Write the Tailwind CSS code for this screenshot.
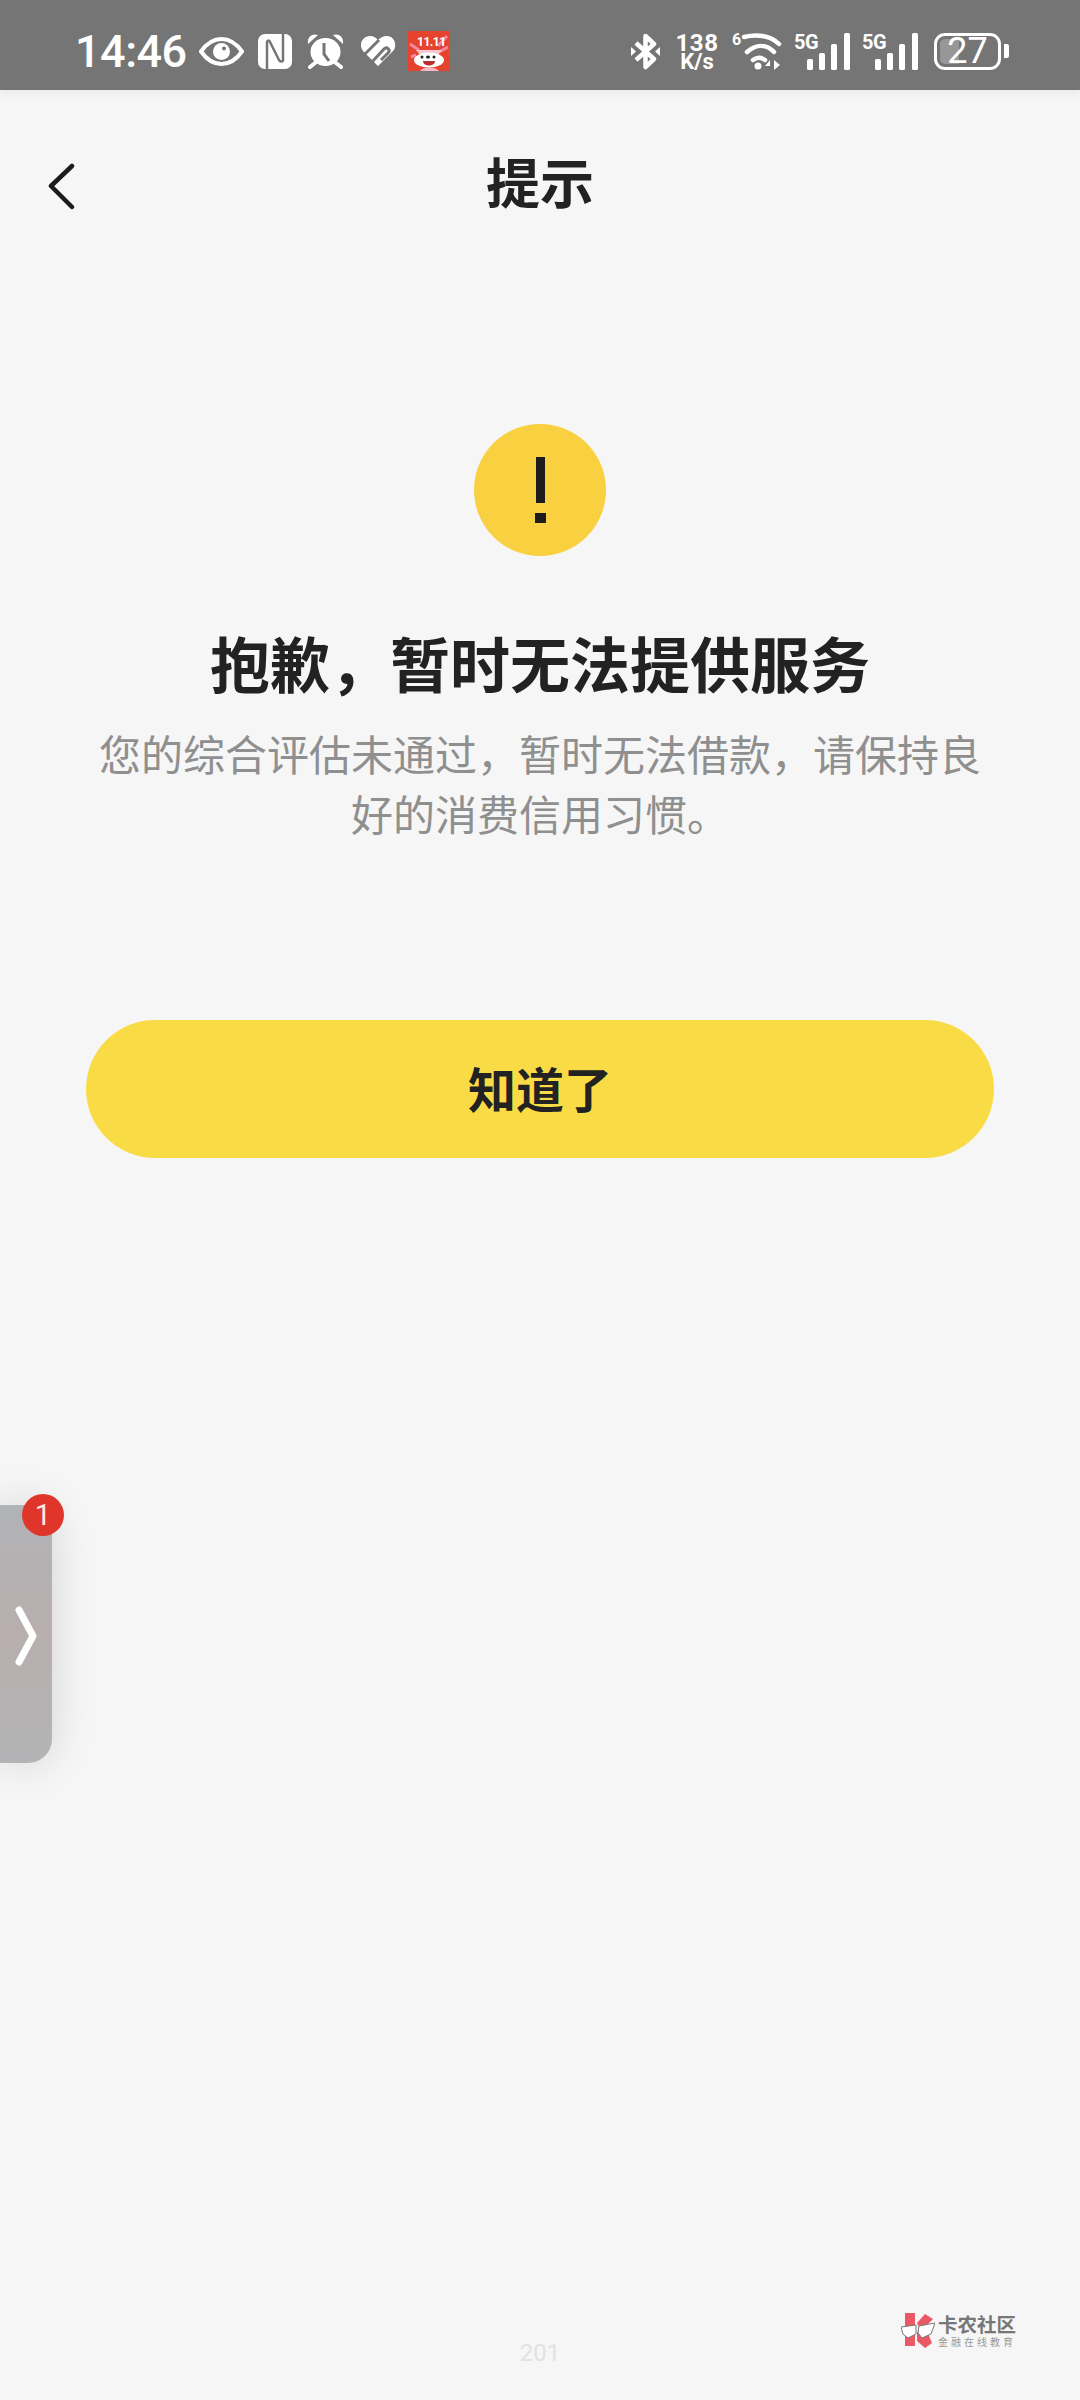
<!DOCTYPE html>
<html lang="zh-CN">
<head>
<meta charset="UTF-8">
<script src="https://cdn.jsdelivr.net/npm/@tailwindcss/browser@4"></script>
<title>提示</title>
</head>
<body class="bg-[#f6f6f6] font-['Noto_Sans_CJK_SC','Noto_Sans',sans-serif]">
<div class="relative w-[1080px] h-[2400px] overflow-hidden flex flex-col items-center">

  <!-- status bar -->
  <div class="w-full h-[90px] shrink-0 bg-[#757575] text-white flex items-center pl-[75px] pt-[12px] shadow-[0_3px_8px_rgba(0,0,0,0.06)]">
    <span class="font-['Roboto',sans-serif] font-medium text-[45px] leading-none tracking-[-0.5px] w-[109px] whitespace-nowrap">14:46</span>
    <svg class="w-[45px] h-[29px] ml-[15px] shrink-0" viewBox="0 0 45 29"><path d="M2 14.500C8 6 14 2 22.500 2S37 6 43 14.500C37 23 31 27 22.500 27S8 23 2 14.500Z" fill="none" stroke="white" stroke-width="4"/><circle cx="22.500" cy="14.500" r="8.500" fill="white"/><circle cx="25" cy="11.500" r="2" fill="#757575"/></svg>
    <svg class="w-[34px] h-[35px] ml-[14px] shrink-0" viewBox="0 0 34 35"><rect width="34" height="35" rx="7" fill="white"/><path d="M9 35V9C9 6 11 6 12 8L21 26C22 28 25 28 25 26V0" fill="none" stroke="#757575" stroke-width="2.500"/></svg>
    <svg class="w-[37px] h-[35px] ml-[15px] shrink-0" viewBox="0 0 37 35"><ellipse cx="18.500" cy="18" rx="15" ry="14" fill="white"/><path d="M1 10C0 3 5-1 11 1ZM36 10C37 3 32-1 26 1Z" fill="white"/><path d="M8 29 3 33M29 29 34 33" stroke="white" stroke-width="4" stroke-linecap="round"/><path d="M17 9V20L22 27" fill="none" stroke="#757575" stroke-width="3"/></svg>
    <svg class="w-[36px] h-[30px] ml-[16px] shrink-0" viewBox="0 0 36 30"><path d="M18 30 3 15C-2 8 3 0 10 0 14 0 16 2 18 4 20 2 23 0 27 0 34 0 38 9 33 15Z" fill="white"/><path d="M3 20 19 4M12 26 24 13C27 10 31 14 28 17L21 24" fill="none" stroke="#757575" stroke-width="3"/></svg>
    <div class="relative w-[41px] h-[40px] ml-[12px] shrink-0 bg-[#e5432e]">
      <svg class="w-[41px] h-[40px]" viewBox="0 0 41 40"><path d="M2 13 11 19M39 5 30 15M40 16 31 21M3 26 8 24" stroke="#f08aa0" stroke-width="3"/><path d="M8 19H34L30 24H12Z" fill="#f7c6d0"/><ellipse cx="21" cy="29" rx="15" ry="7.500" fill="white"/><path d="M12 40C16 35 26 35 31 40Z" fill="#f4b8c4"/><path d="M15 30H27C27 36 15 36 15 30Z" fill="#b92f2a"/><circle cx="14" cy="26" r="1.500" fill="#222"/><circle cx="26" cy="26" r="1.500" fill="#222"/><ellipse cx="20" cy="26" rx="2" ry="1.500" fill="#222"/></svg>
      <span class="absolute left-[9px] top-[4px] font-['Roboto',sans-serif] font-bold text-[12px] leading-[14px] tracking-[-0.5px]">11.11</span>
    </div>

    <svg class="w-[29px] h-[37px] ml-[182px] shrink-0" viewBox="0 0 29 37"><path d="M5 10 23 26 14.500 34V3L23 11 5 27" fill="none" stroke="white" stroke-width="4.500" stroke-linejoin="round"/><path d="M0 14 5 18.500 0 23ZM29 14 24 18.500 29 23Z" fill="white"/></svg>
    <div class="w-[42px] ml-[16px] shrink-0 flex flex-col items-center font-['Roboto',sans-serif] font-bold leading-none">
      <span class="text-[24px] h-[20px] leading-[20px] tracking-[0.5px]">138</span>
      <span class="text-[22px] h-[17px] leading-[17px]">K/s</span>
    </div>
    <div class="relative w-[51px] h-[37px] ml-[14px] shrink-0">
      <svg class="w-[51px] h-[37px]" viewBox="0 0 51 37"><path d="M12 4C24 1 38 2 47 11M15 19C24 11 34 11 42 19M21 27C25 24 29 24 33 27" fill="none" stroke="white" stroke-width="4.500" stroke-linecap="round"/><circle cx="26" cy="33" r="3.500" fill="white"/><path d="M38 37V27L33 33H38ZM42 27V37L48 32Z" fill="white"/></svg>
      <span class="absolute left-0 top-0 font-['Roboto',sans-serif] font-bold text-[16px] leading-[13px]">6</span>
    </div>
    <div class="relative w-[56px] h-[37px] ml-[11px] shrink-0">
      <svg class="w-[56px] h-[37px]" viewBox="0 0 56 37"><rect x="13" y="26" width="6" height="11" rx="1.500" fill="white"/><rect x="25" y="20" width="6" height="17" rx="1.500" fill="white"/><rect x="37" y="11" width="6" height="26" rx="1.500" fill="white"/><rect x="50" y="0" width="6" height="37" rx="1.500" fill="white"/></svg>
      <span class="absolute left-0 top-0 font-['Roboto',sans-serif] font-bold text-[20px] leading-[18px] tracking-[-0.5px]">5G</span>
    </div>
    <div class="relative w-[56px] h-[37px] ml-[12px] shrink-0">
      <svg class="w-[56px] h-[37px]" viewBox="0 0 56 37"><rect x="13" y="26" width="6" height="11" rx="1.500" fill="white"/><rect x="25" y="20" width="6" height="17" rx="1.500" fill="white"/><rect x="37" y="11" width="6" height="26" rx="1.500" fill="white"/><rect x="50" y="0" width="6" height="37" rx="1.500" fill="white"/></svg>
      <span class="absolute left-0 top-0 font-['Roboto',sans-serif] font-bold text-[20px] leading-[18px] tracking-[-0.5px]">5G</span>
    </div>
    <div class="relative ml-[16px] shrink-0 w-[67px] h-[37px] border-[3px] border-white rounded-[11px] flex items-center justify-center">
      <div class="absolute left-[3px] top-[3px] bottom-[3px] w-[19px] bg-white/25 rounded-l-[5px]"></div>
      <span class="relative font-['Roboto',sans-serif] text-[36px] leading-none">27</span>
    </div>
    <div class="ml-[3px] w-[5px] h-[14px] bg-white rounded-r-[2px] shrink-0"></div>
  </div>

  <!-- title bar -->
  <div class="w-full h-[187px] shrink-0 flex items-center justify-center relative">
    <svg class="absolute left-[46px] top-[72px] w-[32px] h-[48px]" viewBox="0 0 32 48"><path d="M26 4 5 24 26 45" fill="none" stroke="#1c1c1c" stroke-width="4.500" stroke-linecap="round" stroke-linejoin="round"/></svg>
    <h1 class="text-[54px] font-bold text-[#222] leading-none -mt-[6px]">提示</h1>
  </div>

  <!-- result -->
  <div class="w-[132px] h-[132px] mt-[147px] rounded-full bg-[#f9d03f] flex flex-col items-center justify-center shrink-0">
    <div class="w-[9px] h-[46px] bg-[#1c1c1c]"></div>
    <div class="w-[11px] h-[10px] bg-[#1c1c1c] mt-[10px]"></div>
  </div>
  <h2 class="mt-[66px] text-[60px] font-bold text-[#222] leading-[80px] whitespace-nowrap">抱歉，暂时无法提供服务</h2>
  <p class="mt-[21px] w-[890px] text-center text-[42px] leading-[60px] text-[#8f8f8f]">您的综合评估未通过，暂时无法借款，请保持良好的消费信用习惯。</p>

  <button class="mt-[177px] w-[908px] h-[138px] shrink-0 rounded-full bg-[#f9dc45] pb-[4px] text-[48px] font-bold text-[#222]">知道了</button>

  <!-- side tab -->
  <div class="absolute left-0 top-[1505px] w-[52px] h-[258px] rounded-r-[24px] bg-gradient-to-b from-[#b1b3b6] via-[#b8aeae] to-[#b3b4b6] shadow-[0_0_44px_rgba(0,0,0,0.14)] flex items-center">
    <svg class="w-[22px] h-[60px] ml-[15px] mt-[4px]" viewBox="0 0 22 60"><path d="M4 4 18 30 4 56" fill="none" stroke="white" stroke-width="7" stroke-linecap="round" stroke-linejoin="round"/></svg>
  </div>
  <div class="absolute left-[22px] top-[1494px] w-[42px] h-[42px] rounded-full bg-[#e0352b] text-[#ffe9e4] flex items-center justify-center font-['Roboto',sans-serif] text-[29px] leading-none">1</div>

  <!-- footer -->
  <span class="absolute left-0 right-0 top-[2341px] text-center font-['Roboto',sans-serif] text-[24px] leading-none text-[#e2e2e2]">201</span>
  <div class="absolute left-[901px] top-[2313px] flex items-start">
    <svg class="w-[34px] h-[35px] shrink-0" viewBox="0 0 34 35"><path d="M4 0H14V33H4ZM16 10 24 1 32 6 20 18ZM16 19 26 18 31 30 24 35 16 28Z" fill="#ea5a66"/><path d="M0 14 15 12 15 21 7 25 2 21ZM18 13 34 10 30 21 21 25 17 20Z" fill="white" stroke="#777" stroke-width="1"/></svg>
    <div class="ml-[3px] flex flex-col">
      <span class="text-[19.500px] h-[22px] leading-[22px] font-bold text-[#777] whitespace-nowrap">卡农社区</span>
      <span class="text-[10px] h-[13px] leading-[13px] tracking-[3px] text-[#999] whitespace-nowrap">金融在线教育</span>
    </div>
  </div>
</div>
</body>
</html>
